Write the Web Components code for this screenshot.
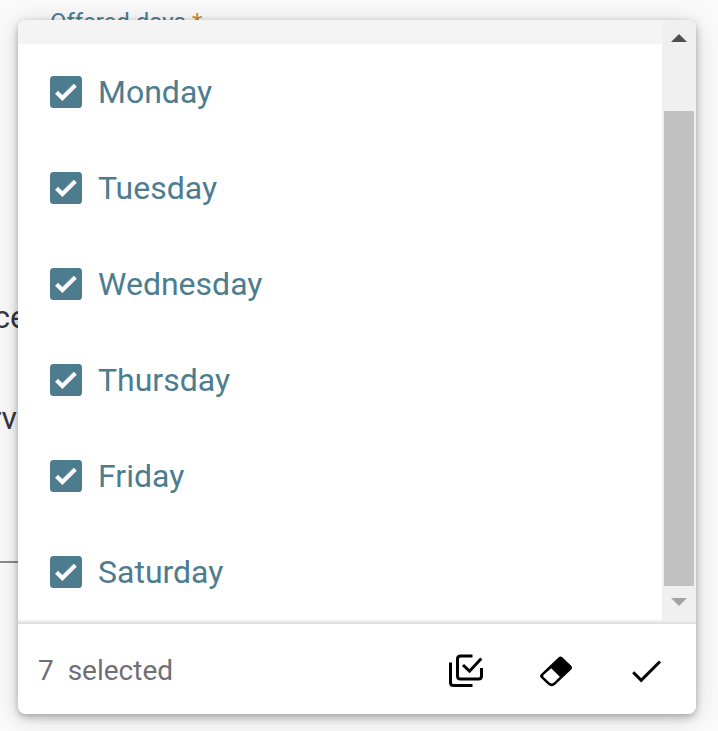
<!DOCTYPE html>
<html lang="en"><head><meta charset="utf-8"><title>Offered days</title>
<style>
html,body{margin:0;width:718px;height:731px;overflow:hidden;background:#fafafa;font-family:Roboto,sans-serif}
</style></head><body>
<offered-days-page></offered-days-page>
<script>
const define=(name,html)=>customElements.define(name,class extends HTMLElement{
  constructor(){super();this.attachShadow({mode:'open'}).innerHTML=html;}
});
define('day-option',`<style>
:host{display:flex;align-items:center;height:96px;padding-left:32px;gap:16px;color:#4d7c8f;font-size:32px;line-height:38px}
svg{width:32px;height:32px;flex:none}
</style><svg viewBox="0 0 32 32"><rect width="32" height="32" rx="3.5" fill="#4d7c8f"/><path d="M6.500 16.200L12.400 22.100L25.300 9.200" fill="none" stroke="#fafafa" stroke-width="4.200"/></svg><span><slot></slot></span>`);
define('scroll-rail',`<style>
:host{display:flex;flex-direction:column;align-items:center;width:34px;height:602px;background:#f0f0f0}
svg{width:16px;height:8px;flex:none}
.up{margin-top:14px}.thumb{width:30px;height:475px;margin:69px 2px 12px;background:#c1c1c1}
</style><svg class="up" viewBox="0 0 16 8"><path d="M0 8L8 0L16 8Z" fill="#505050"/></svg><div class="thumb"></div><svg viewBox="0 0 16 8"><path d="M0 0L8 8L16 0Z" fill="#a3a3a3"/></svg>`);
define('option-list',`<style>
:host{display:flex;height:602px}
.items{flex:1;box-sizing:border-box;border-bottom:2px solid #f0f0f0}
.previous{height:24px;background:#f4f4f4}
</style><div class="items"><div class="previous"></div><slot></slot></div><scroll-rail></scroll-rail>`);
define('selection-bar',`<style>
:host{display:flex;align-items:center;box-sizing:border-box;height:92px;padding:4px 30px 0 20px;border-top:2px solid #e0e0e0;color:#6f6f75;font-size:28px;background:#fff}
.count{flex:1;white-space:pre;line-height:34px}
.actions{display:flex;gap:50px}
svg{width:40px;height:40px;display:block;color:#000}
</style><span class="count"><slot></slot></span>
<div class="actions">
<svg viewBox="0 0 40 40" fill="none" stroke="currentColor" stroke-width="3"><path d="M26.500 5H14.500Q11.500 5 11.500 8V25Q11.500 28 14.500 28H32.500Q35.500 28 35.500 25V17"/><path d="M4.500 11.500V31.500Q4.500 34.500 7.500 34.500H26.500"/><path d="M17 14L23.500 20.200L35.300 7.500"/></svg>
<svg viewBox="0 0 40 40"><path fill="currentColor" fill-rule="evenodd" d="M22.700 6.200Q24.500 4.600 26.300 6.200L35.200 14.700Q37.100 16.600 35.200 18.500L19.400 33.600Q15.700 36.800 11.900 33.600L5.100 27.100Q3 25 5.100 22.900ZM15.200 17.200L7.600 24.100Q6.800 25 7.600 25.900L13.500 31.500Q15.700 33.300 18 31.500L23.800 25.700Z"/></svg>
<svg viewBox="0 0 40 40"><path d="M7.200 21.300L15.200 29.300L34 10.500" fill="none" stroke="currentColor" stroke-width="3"/></svg>
</div>`);
define('select-panel',`<style>
:host{display:block;position:absolute;left:18px;top:20px;width:678px;height:694px;border-radius:8px;overflow:hidden;background:#fff;box-shadow:0 4px 8px rgba(0,0,0,.2),0 3px 26px rgba(0,0,0,.15),0 1px 5px rgba(0,0,0,.12)}
</style><slot></slot>`);
define('form-backdrop',`<style>
:host{display:block;position:absolute;inset:0;overflow:hidden;color:#36363d;font-size:32px;line-height:36px}
span,i{position:absolute;white-space:nowrap}
.label{left:50px;top:8px;font-size:24px;line-height:28px;color:#4d7c8f}
.label b{font-weight:400;color:#d28b2d}
.one{right:691px;top:299px}.two{right:701px;top:400px}
i{left:0;top:561px;width:40px;height:2px;background:#8c8c8c}
</style><span class="label">Offered days <b>*</b></span><span class="one">ce</span><span class="two">rv</span><i></i>`);
define('offered-days-page',`<style>
:host{display:block;position:relative;width:718px;height:731px;overflow:hidden}
</style><form-backdrop></form-backdrop><select-panel><option-list>
<day-option>Monday</day-option><day-option>Tuesday</day-option><day-option>Wednesday</day-option><day-option>Thursday</day-option><day-option>Friday</day-option><day-option>Saturday</day-option>
</option-list><selection-bar>7&nbsp; selected</selection-bar></select-panel>`);
</script></body></html>
